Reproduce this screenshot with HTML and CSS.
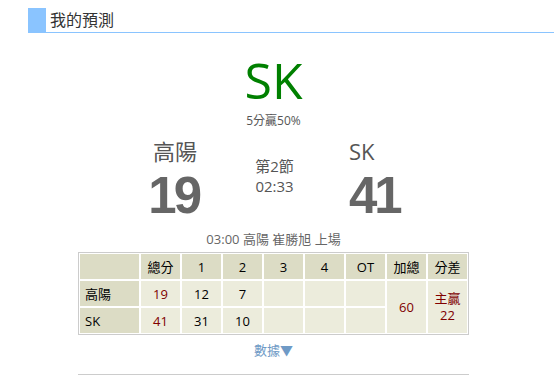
FILE: index.html
```html
<!DOCTYPE html>
<html lang="zh-Hant">
<head>
<meta charset="utf-8">
<link rel="stylesheet" href="styles.css">
</head>
<body>
<div class="title-bar"><span class="title">我的預測</span></div>
<div class="content">
  <div class="pick">SK</div>
  <div class="pick-sub">5分贏50%</div>
  <div class="board">
    <div class="team home">高陽</div>
    <div class="period"><div>第2節</div><div>02:33</div></div>
    <div class="team away">SK</div>
    <div class="score home">19</div>
    <div class="score away">41</div>
  </div>
  <div class="note">03:00 高陽 崔勝旭 上場</div>
  <table class="stats">
    <tr class="head">
      <th class="name"></th><th>總分</th><th>1</th><th>2</th><th>3</th><th>4</th><th>OT</th><th>加總</th><th>分差</th>
    </tr>
    <tr>
      <th class="name">高陽</th><td class="red">19</td><td>12</td><td>7</td><td></td><td></td><td></td>
      <td class="red" rowspan="2">60</td><td class="red diff" rowspan="2"><div>主贏</div><div>22</div></td>
    </tr>
    <tr>
      <th class="name">SK</th><td class="red">41</td><td>31</td><td>10</td><td></td><td></td><td></td>
    </tr>
  </table>
  <div class="more">數據▼</div>
  <div class="rule"></div>
</div>
</body>
</html>
```
FILE: styles.css
```css
html, body {
  margin: 0;
  padding: 0;
  background: #fff;
}
body {
  font-family: "Open Sans", "Noto Sans CJK TC", sans-serif;
  color: #555;
}
.title-bar {
  margin: 8px 0 0 28px;
  height: 24px;
  border-left: 18px solid #8ac4ff;
  border-bottom: 1px solid #8ac4ff;
  padding-left: 4px;
  display: flex;
  align-items: center;
}
.title {
  font-size: 16px;
  color: #333;
  line-height: 24px;
}
.content {
  margin-left: 78px;
  width: 391px;
}
.pick {
  margin-top: 22px;
  text-align: center;
  font-size: 50px;
  line-height: 50px;
  color: #008000;
}
.pick-sub {
  margin-top: 8px;
  text-align: center;
  font-size: 12px;
  line-height: 16px;
  color: #555;
}
.board {
  margin-left: 70px;
  margin-top: 7px;
  display: grid;
  grid-template-columns: 52px 149px 60px;
  grid-template-rows: 30px 55px;
}
.team {
  font-size: 22px;
  line-height: 30px;
  color: #555;
}
.team.home {
  padding-right: 3px;
}
.home {
  text-align: right;
}
.away {
  text-align: left;
}
.period {
  grid-row: 1 / span 2;
  grid-column: 2;
  text-align: center;
  font-size: 15px;
  line-height: 20px;
  padding-top: 20px;
  color: #555;
}
.score {
  font-family: "Liberation Sans", Arial, sans-serif;
  font-weight: bold;
  font-size: 51px;
  letter-spacing: -3px;
  line-height: 50px;
  padding-top: 5px;
  color: #666;
  white-space: nowrap;
}
.score.home {
  padding-right: 1px;
}
.note {
  margin-top: 9px;
  text-align: center;
  font-size: 13px;
  line-height: 18px;
  color: #666;
}
.stats {
  margin-top: 4px;
  border: 1px solid #ccc;
  border-spacing: 0;
  width: 391px;
  table-layout: fixed;
  font-size: 13px;
  color: #000;
}
.stats th, .stats td {
  border: 1px solid #fff;
  height: 25px;
  padding: 0;
  text-align: center;
  font-weight: normal;
  background: #ececdc;
  width: 39px;
  line-height: 16px;
}
.stats .head th {
  background: #dcdcc5;
}
.stats th.name {
  background: #dcdcc5;
  text-align: left;
  padding-left: 5px;
  width: 54px;
}
.stats .red {
  color: #800000;
}
.stats .diff div {
  line-height: 17px;
  color: #800000;
}
.more {
  margin-top: 6px;
  text-align: center;
  font-size: 13px;
  line-height: 18px;
  color: #6f9ac6;
}
.rule {
  margin-top: 15px;
  border-top: 1px solid #ccc;
}
```
